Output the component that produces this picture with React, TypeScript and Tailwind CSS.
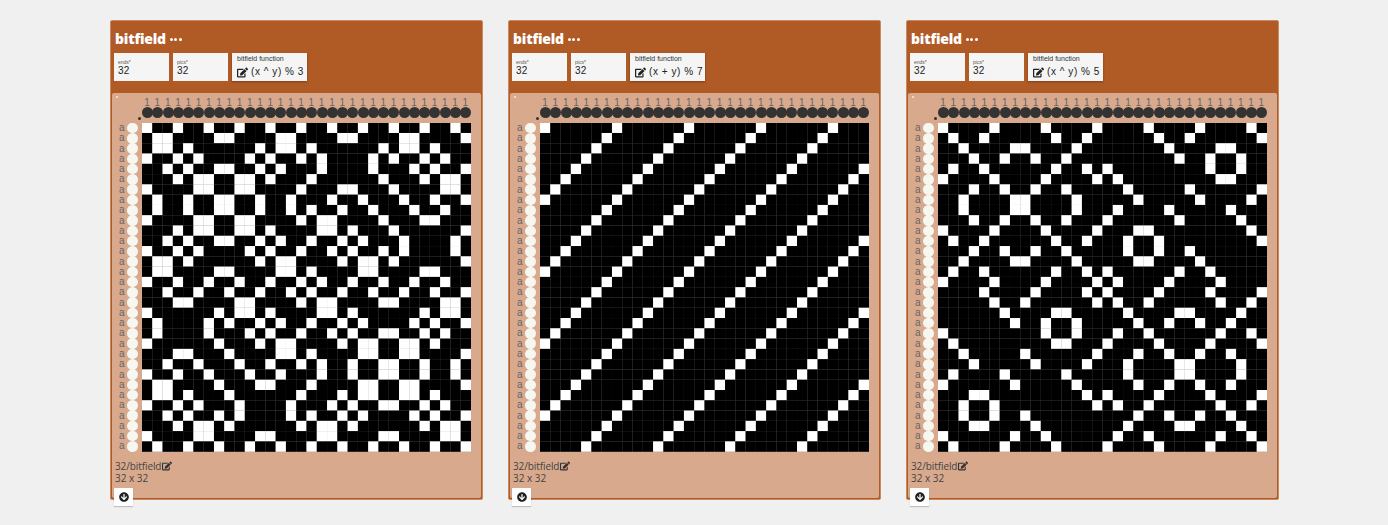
import React from "react";
import { FaEdit, FaArrowCircleDown } from "react-icons/fa";

const N = 32;
const C = 329 / 32;
const idx = Array.from({ length: N }, (_, i) => i);

function Weave({ fn }: { fn: (x: number, y: number) => boolean }) {
  return (
    <svg width="329" height="329" viewBox="0 0 329 329" className="block shrink-0 bg-[#808080]">
      {idx.flatMap((y) =>
        idx.map((x) => (
          <rect
            key={x + "-" + y}
            x={x * C}
            y={y * C - 0.3}
            width={C}
            height={C}
            fill={fn(x, y) ? "#ffffff" : "#000000"}
          />
        ))
      )}
    </svg>
  );
}

function Panel({ expr, fn }: { expr: string; fn: (x: number, y: number) => boolean }) {
  return (
    <div className="w-[373px] h-[480px] shrink-0 flex flex-col rounded-[2px] bg-[#b05a26] border border-[#c98a60]">
      <div className="h-[32px] pl-[4px] pt-[3px] flex items-center gap-[4px] text-white font-extrabold text-[14px] tracking-[-0.2px] leading-none">
        <span className="font-['Open_Sans',sans-serif]">bitfield</span>
        <span className="flex gap-[1.5px] mt-[2px]">
          <i className="w-[3px] h-[3px] rounded-full bg-white" />
          <i className="w-[3px] h-[3px] rounded-full bg-white" />
          <i className="w-[3px] h-[3px] rounded-full bg-white" />
        </span>
      </div>
      <div className="flex gap-[4px] pl-[3px] h-[28px]">
        <div className="w-[55px] h-[28px] bg-[#f5f5f5] pl-[4px] pt-[6px]">
          <div className="text-[5px] leading-[6px] text-[#555]">ends*</div>
          <div className="text-[10px] leading-[12px] text-[#222] tracking-[0.2px]">32</div>
        </div>
        <div className="w-[55px] h-[28px] bg-[#f5f5f5] pl-[4px] pt-[6px]">
          <div className="text-[5px] leading-[6px] text-[#555]">pics*</div>
          <div className="text-[10px] leading-[12px] text-[#222] tracking-[0.2px]">32</div>
        </div>
        <div className="w-[75px] h-[28px] bg-[#f5f5f5] pl-[5px] pt-[2px] shadow-[0_1px_2px_rgba(0,0,0,0.3)]">
          <div className="text-[7px] leading-[8px] text-[#333]">bitfield function</div>
          <div className="flex items-center gap-[3px] text-[10px] leading-[14px] text-[#222] mt-[2px]">
            <FaEdit size={11} className="text-[#222] shrink-0" />
            <span className="whitespace-pre tracking-[0.55px]">{expr}</span>
          </div>
        </div>
      </div>
      <div className="mt-[12px] ml-[1px] mr-[1px] mb-[1px] flex-1 bg-[#d8a98c] rounded-[2px] flex flex-col relative">
        <div className="absolute left-[4px] top-[3px] w-[2px] h-[2px] bg-[#f0dccf]" />
        <div className="absolute left-[26px] top-[24px] w-[3px] h-[3px] rounded-full bg-[#333]" />
        <div className="flex pl-[30px] mt-[4px] h-[10px] text-[10px] leading-[11px] text-[#666]">
          {idx.map((i) => (
            <div key={i} className="w-[10.28px] shrink-0 text-center">1</div>
          ))}
        </div>
        <div className="flex pl-[30px] h-[11px]">
          {idx.map((i) => (
            <div key={i} className="w-[10.28px] h-[11px] shrink-0">
              <div className="w-[11px] h-[11px] rounded-full bg-[#333]" />
            </div>
          ))}
        </div>
        <div className="flex mt-[5px]">
          <div className="w-[30px] pl-[7px] shrink-0 flex flex-col">
            {idx.map((i) => (
              <div key={i} className="h-[10.28px] flex items-center text-[10px] leading-none text-[#666]">
                <span className="w-[8px] shrink-0">a</span>
                <i className="w-[10.5px] h-[10.5px] rounded-full bg-[#f7f7f2] shrink-0" />
              </div>
            ))}
          </div>
          <Weave fn={fn} />
        </div>
        <div className="pl-[3px] mt-[8px] h-[12px] font-['Open_Sans',sans-serif] text-[10px] tracking-[-0.1px] leading-[12px] text-[#444] flex items-center gap-[1px]">
          32/bitfield <FaEdit size={10} className="text-[#333]" />
        </div>
        <div className="pl-[3px] font-['Open_Sans',sans-serif] text-[10px] leading-[12px] text-[#444]">32 x 32</div>
        <div className="absolute left-[2px] bottom-[-8px] w-[19px] h-[18px] bg-white flex items-center justify-center shadow-[0_1px_1px_rgba(0,0,0,0.2)]">
          <FaArrowCircleDown size={10} className="text-[#222]" />
        </div>
      </div>
    </div>
  );
}

export default function App() {
  return (
    <div className="w-[1388px] h-[525px] overflow-hidden bg-[#f0f0f0] flex gap-[25px] pl-[110px] pt-[20px] font-['Liberation_Sans',sans-serif]">
      <Panel expr="(x ^ y) % 3" fn={(x, y) => (x ^ y) % 3 === 0} />
      <Panel expr="(x + y) % 7" fn={(x, y) => (x + y) % 7 === 0} />
      <Panel expr="(x ^ y) % 5" fn={(x, y) => (x ^ y) % 5 === 0} />
    </div>
  );
}
